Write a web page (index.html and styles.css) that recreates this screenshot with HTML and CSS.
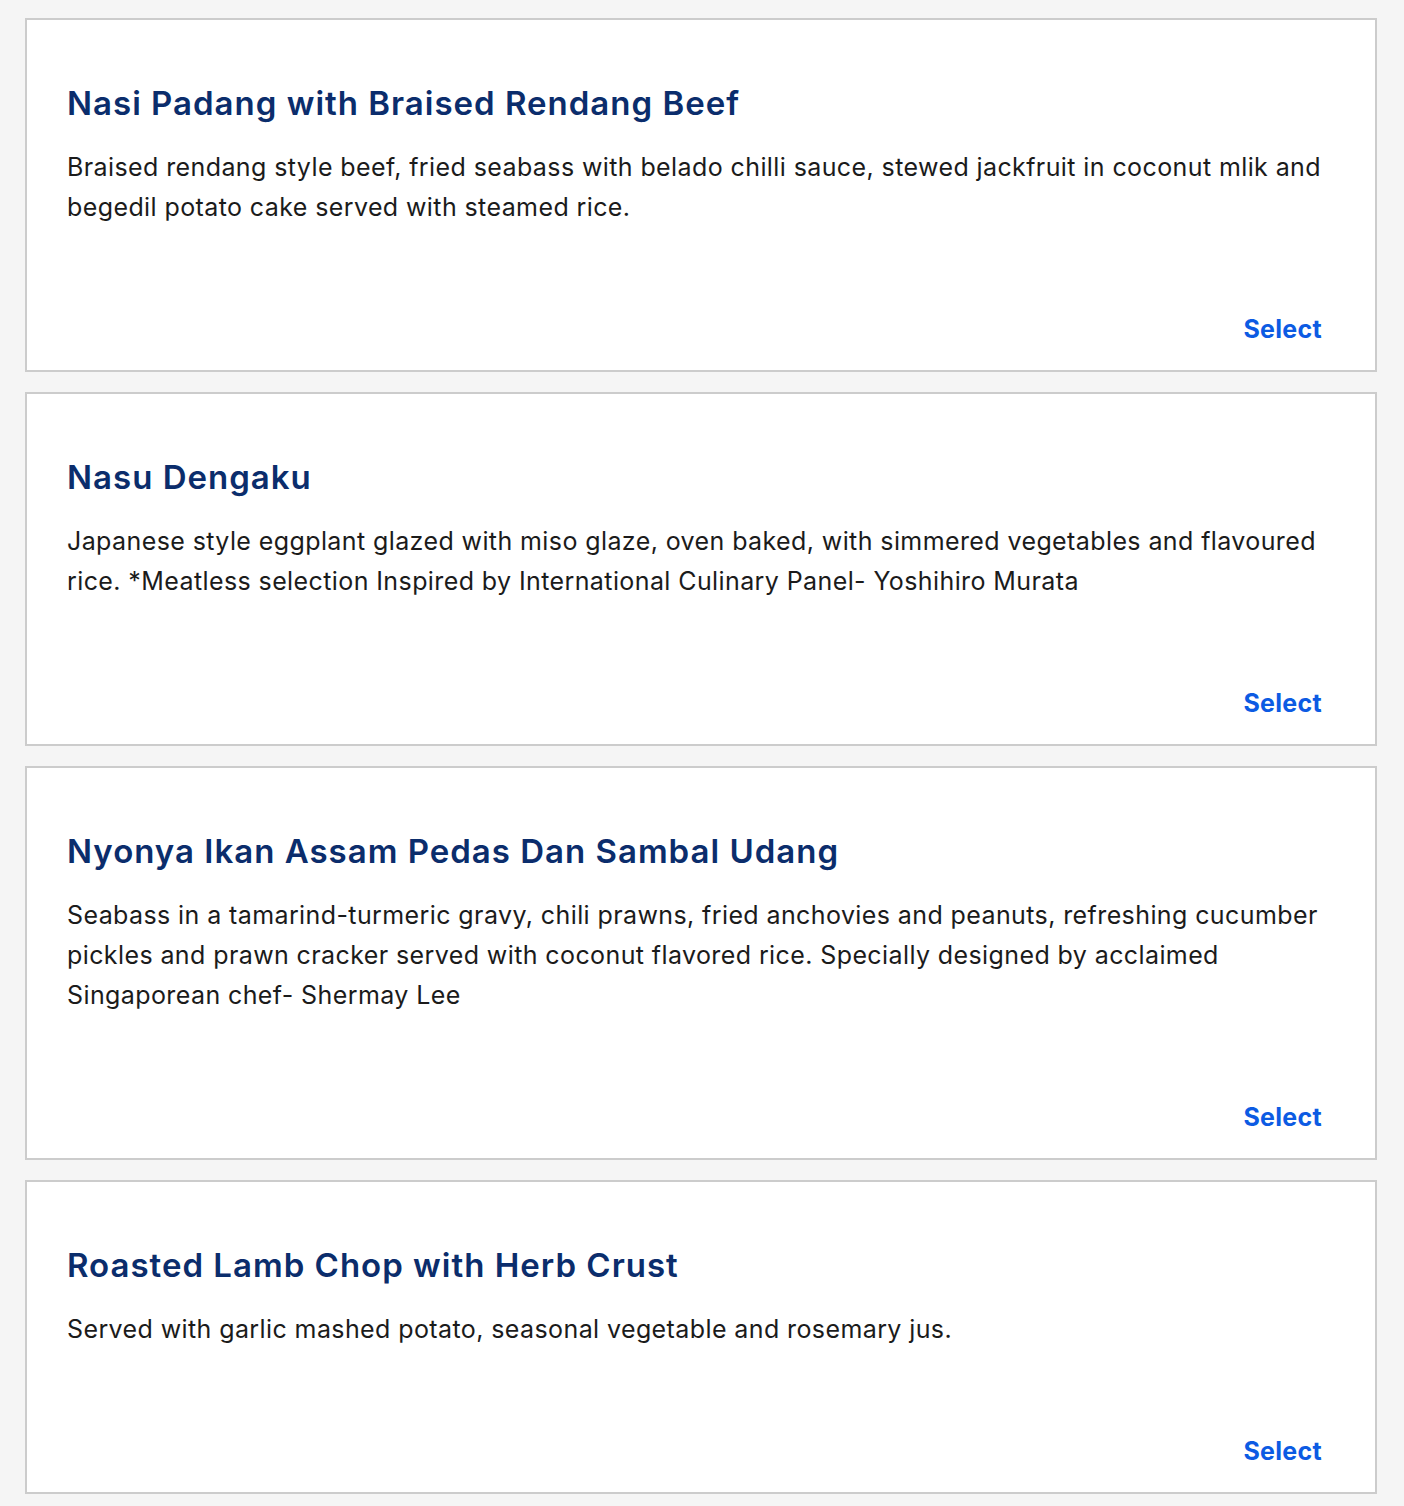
FILE: index.html
```html
<!DOCTYPE html>
<html lang="en">
<head>
<meta charset="utf-8">
<title>Meal selection</title>
<link rel="stylesheet" href="styles.css">
</head>
<body>
<main class="list">
  <section class="card">
    <h2 class="title">Nasi Padang with Braised Rendang Beef</h2>
    <p class="desc">Braised rendang style beef, fried seabass with belado chilli sauce, stewed jackfruit in coconut mlik and begedil potato cake served with steamed rice.</p>
    <div class="actions"><a class="select" href="#">Select</a></div>
  </section>
  <section class="card">
    <h2 class="title">Nasu Dengaku</h2>
    <p class="desc">Japanese style eggplant glazed with miso glaze, oven baked, with simmered vegetables and flavoured rice. *Meatless selection Inspired by International Culinary Panel- Yoshihiro Murata</p>
    <div class="actions"><a class="select" href="#">Select</a></div>
  </section>
  <section class="card">
    <h2 class="title">Nyonya Ikan Assam Pedas Dan Sambal Udang</h2>
    <p class="desc">Seabass in a tamarind-turmeric gravy, chili prawns, fried anchovies and peanuts, refreshing cucumber pickles and prawn cracker served with coconut flavored rice. Specially designed by acclaimed Singaporean chef- Shermay Lee</p>
    <div class="actions"><a class="select" href="#">Select</a></div>
  </section>
  <section class="card">
    <h2 class="title">Roasted Lamb Chop with Herb Crust</h2>
    <p class="desc">Served with garlic mashed potato, seasonal vegetable and rosemary jus.</p>
    <div class="actions"><a class="select" href="#">Select</a></div>
  </section>
</main>
</body>
</html>
```
FILE: styles.css
```css
html, body {
  margin: 0;
  padding: 0;
  background: #f5f5f5;
}
body {
  font-family: Inter, Lato, "Liberation Sans", sans-serif;
  color: #1b1b1b;
}
.list {
  display: flex;
  flex-direction: column;
  gap: 20px;
  padding: 18px 27px 12px 25px;
}
.card {
  background: #ffffff;
  border: 2px solid #cccccc;
  padding: 63px 40px 21px 40px;
}
.title {
  margin: 0;
  font-size: 33px;
  line-height: 40px;
  font-weight: 600;
  letter-spacing: 1px;
  color: #0b2d6c;
}
.desc {
  margin: 24px 0 0;
  font-size: 25px;
  line-height: 40px;
  letter-spacing: 0.4px;
  color: #1b1b1b;
}
.actions {
  display: flex;
  justify-content: flex-end;
  margin-top: 82px;
  padding-right: 13px;
}
.select {
  font-size: 25px;
  line-height: 40px;
  font-weight: 700;
  letter-spacing: 0.3px;
  color: #0c5be3;
  text-decoration: none;
}
```
